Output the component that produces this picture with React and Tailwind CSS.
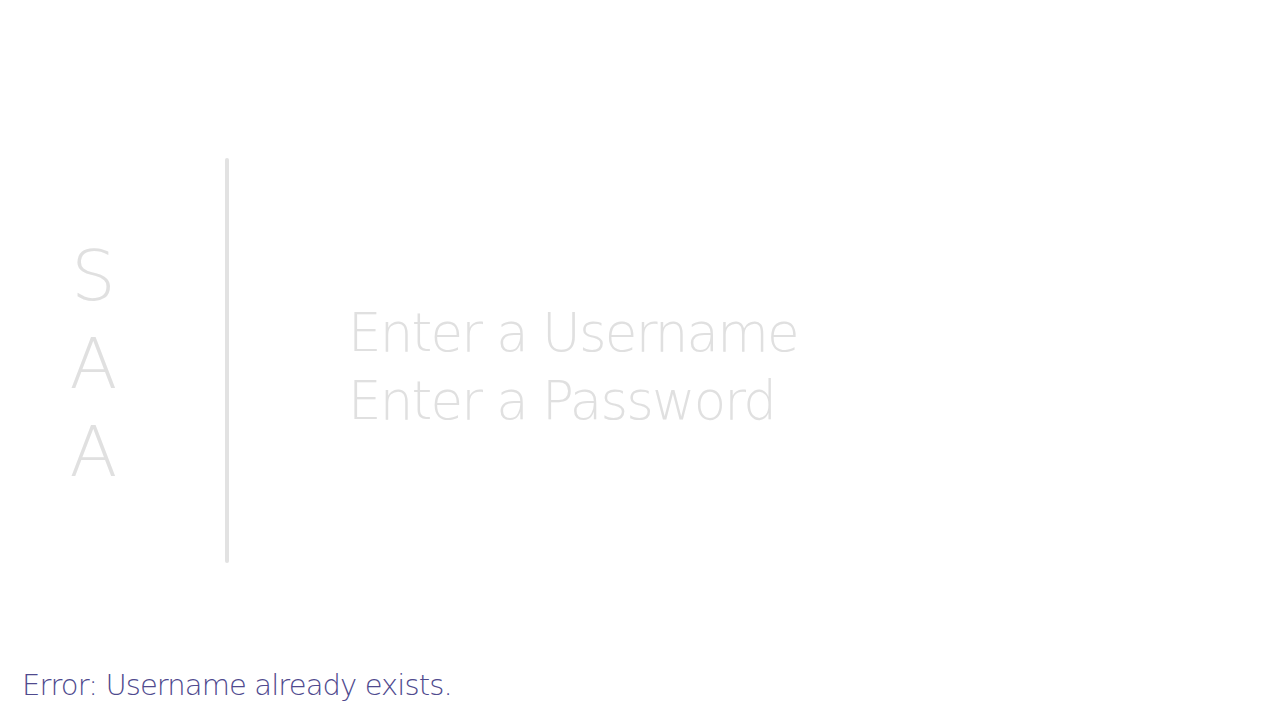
import { useState } from "react";

// Signup screen: vertical brand letters, divider, two bare inputs, error note
const App = () => {
  const [username, setUsername] = useState("");
  const [password, setPassword] = useState("");
  const [error] = useState("Error: Username already exists.");

  return (
    <div className="relative h-[720px] w-[1280px] bg-white font-['DejaVu_Sans',sans-serif] font-extralight overflow-hidden">
      <div className="flex h-[720px] items-center">
        {/* Brand letters */}
        <div className="flex w-[225px] flex-col items-center pr-[38px] pt-[8px] text-[70px] leading-[88px] text-[#e0e0e0]">
          <span>S</span>
          <span>A</span>
          <span>A</span>
        </div>

        {/* Divider */}
        <div className="h-[405px] w-[4px] rounded-full bg-[#e2e2e2]" />

        {/* Inputs */}
        <form className="ml-[119px] mt-[14px] flex flex-col text-[53px] leading-[68px] tracking-[-1.8px]">
          <input
            type="text"
            value={username}
            onChange={(e) => setUsername(e.target.value)}
            placeholder="Enter a Username"
            className="w-[700px] bg-transparent p-0 font-extralight outline-none placeholder:text-[#e0e0e0]"
          />
          <input
            type="password"
            value={password}
            onChange={(e) => setPassword(e.target.value)}
            placeholder="Enter a Password"
            className="w-[700px] bg-transparent p-0 font-extralight outline-none placeholder:text-[#e0e0e0]"
          />
        </form>
      </div>

      {/* Error message */}
      <p className="absolute bottom-[13px] left-[22px] text-[29px] tracking-[-0.9px] text-[#4f4a8e]">
        {error}
      </p>
    </div>
  );
};

export default App;
